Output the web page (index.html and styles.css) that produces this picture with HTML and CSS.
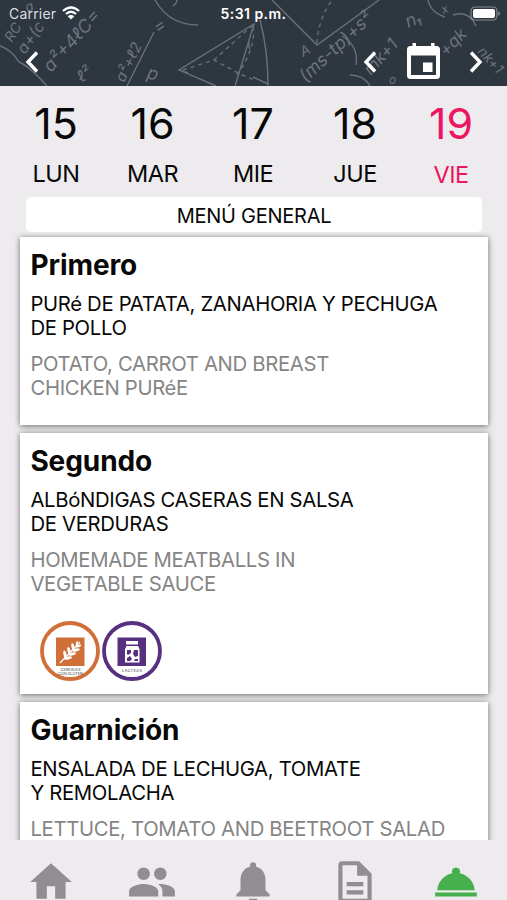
FILE: index.html
```
<!DOCTYPE html>
<html lang="es">

<head>
    <meta charset="UTF-8">
    <title>Menú</title>
    <link rel="stylesheet" href="styles.css">
</head>

<body>
    <header class="header">
        <!-- chalkboard background -->
        <svg class="chalk" width="507" height="86" viewBox="0 0 507 86">
            <g class="chalk-lines">
                <path d="M0 46Q12 50 19 62Q29 66 47 86M127 86L154 32M155 0Q169 25 198 25M173 6Q177 3 177 0" />
                <path d="M216 86L179 70L254 24L235 86M179 70L187 65M179 70L188 73M260 20Q268 50 268 86M254 27Q246 43 250 49M253 77L268 84" />
                <path d="M272 0L287 15L317 45L379 0M428 0Q430 12 445 17M453 15Q469 10 476 26M342 36Q359 46 356 65M350 75Q364 75 370 86" />
                <path stroke-dasharray="4 4" d="M183 70L214 60L240 74L254 80M214 60L254 24M317 43Q318 20 332 0M237 75Q253 53 254 30" />
            </g>
            <g class="chalk-text">
                <text transform="translate(12 43) rotate(-58)" font-size="14">RC</text>
                <text transform="translate(25 55) rotate(-55)" font-size="16">a+(c</text>
                <text transform="translate(27 12) rotate(-20)" font-size="13">a</text>
                <text transform="translate(51 73) rotate(-48)" font-size="18">a²+4ℓC=</text>
                <text transform="translate(82 83) rotate(-38)" font-size="16">ℓ²</text>
                <text transform="translate(124 83) rotate(-64)" font-size="15">a²+ℓ2</text>
                <text transform="translate(146 78) rotate(15)" font-size="18">p</text>
                <text transform="translate(158 34) rotate(-35)" font-size="18">=</text>
                <text transform="translate(303 57) rotate(-28)" font-size="14">A</text>
                <text transform="translate(306 83) rotate(-43)" font-size="18">(ms-tp)+s²</text>
                <text transform="translate(371 76) rotate(-48)" font-size="17">mk+1</text>
                <text transform="translate(408 28) rotate(-22)" font-size="18">n₁</text>
                <text transform="translate(446 57) rotate(-45)" font-size="17">+qk</text>
                <text transform="translate(477 52) rotate(48)" font-size="14">nk+1</text>
                <text transform="translate(443 14) rotate(-20)" font-size="12">x</text>
                <text transform="translate(389 84)" font-size="12">o</text>
            </g>
        </svg>
        <div class="status">
            <div class="carrier">
                <span>Carrier</span>
                <svg width="18" height="14" viewBox="0 0 18 14">
                    <path class="wifi" d="M1 5Q9-2 17 5M4 8Q9 3.5 14 8" />
                    <path fill="#fff" d="M9 13.5L5.7 10.2Q9 7.8 12.3 10.2z" />
                </svg>
            </div>
            <div class="time">5:31 p.m.</div>
            <svg class="battery" width="31" height="16" viewBox="0 0 31 16">
                <rect x="1" y="1" width="26" height="13" rx="4" fill="none" stroke="#858a8f" stroke-width="1.2" />
                <rect x="3" y="3" width="22" height="9" rx="2" fill="#fff" />
                <path fill="#858a8f" d="M28.3 5.2Q32 7.5 28.3 9.8z" />
            </svg>
        </div>
        <div class="toolbar">
            <svg class="arrow" width="14" height="24" viewBox="0 0 14 24">
                <path d="M12 2.5L3 12L12 21.5" />
            </svg>
            <div class="date-nav">
                <svg class="arrow" width="14" height="24" viewBox="0 0 14 24">
                    <path d="M12 2.5L3 12L12 21.5" />
                </svg>
                <svg width="33" height="38" viewBox="0 0 33 38">
                    <path fill="#fff" fill-rule="evenodd" d="M5.5 0h3.5v3h15V0h3.5v3h2q3.5 0 3.5 3.5v26q0 3.5-3.5 3.5h-26q-3.5 0-3.5-3.5v-26q0-3.5 3.5-3.5h2zM4 12.5v19.5h25v-19.5zM16 19.5h9.5v9.5h-9.5z" />
                </svg>
                <svg class="arrow" width="14" height="24" viewBox="0 0 14 24">
                    <path d="M2 2.5L11 12L2 21.5" />
                </svg>
            </div>
        </div>
    </header>

    <nav class="days">
        <div class="day"><span class="number">15</span><span class="name">LUN</span></div>
        <div class="day"><span class="number">16</span><span class="name">MAR</span></div>
        <div class="day"><span class="number">17</span><span class="name">MIE</span></div>
        <div class="day"><span class="number">18</span><span class="name">JUE</span></div>
        <div class="day selected"><span class="number">19</span><span class="name">VIE</span></div>
    </nav>

    <div class="menu-type">MENÚ GENERAL</div>

    <main class="courses">
        <section class="card">
            <h2>Primero</h2>
            <p>PURé DE PATATA, ZANAHORIA Y PECHUGA<br>DE POLLO</p>
            <p class="english">POTATO, CARROT AND BREAST<br>CHICKEN PURéE</p>
        </section>
        <section class="card second">
            <h2>Segundo</h2>
            <p>ALBóNDIGAS CASERAS EN SALSA<br>DE VERDURAS</p>
            <p class="english">HOMEMADE MEATBALLS IN<br>VEGETABLE SAUCE</p>
            <div class="allergens">
                <svg width="60" height="60" viewBox="0 0 60 60">
                    <circle cx="30" cy="30" r="28" fill="#fff" stroke="#d07038" stroke-width="3.8" />
                    <rect x="16" y="16.5" width="28.5" height="28.5" fill="#d07038" />
                    <path stroke="#fff" stroke-width="1.2" d="M20 42L40 21" />
                    <g fill="#fff">
                        <ellipse cx="25" cy="33.5" rx="1.5" ry="4" transform="rotate(-12 25 33.5)" />
                        <ellipse cx="29" cy="30" rx="1.5" ry="4" transform="rotate(-12 29 30)" />
                        <ellipse cx="33" cy="26" rx="1.5" ry="3.8" transform="rotate(-12 33 26)" />
                        <ellipse cx="37" cy="23" rx="1.2" ry="3" transform="rotate(5 37 23)" />
                        <ellipse cx="28" cy="37" rx="4" ry="1.5" transform="rotate(-12 28 37)" />
                        <ellipse cx="32" cy="33" rx="4" ry="1.5" transform="rotate(-12 32 33)" />
                        <ellipse cx="36" cy="29" rx="3.8" ry="1.5" transform="rotate(-12 36 29)" />
                        <ellipse cx="38.5" cy="25" rx="3" ry="1.2" transform="rotate(-20 38.5 25)" />
                    </g>
                    <text class="allergen-name" x="30.5" y="49.5" textLength="20">CEREALES</text>
                    <text class="allergen-name" x="30.5" y="53.5" textLength="25">CON GLUTEN</text>
                </svg>
                <svg width="60" height="60" viewBox="0 0 60 60">
                    <circle cx="30" cy="30" r="28" fill="#fff" stroke="#573080" stroke-width="3.8" />
                    <rect x="15.5" y="16.5" width="28.5" height="28.5" fill="#573080" />
                    <path fill="#fff" d="M24 20h12v3.5h-12zM24.5 25h11.5l1.5 3v13.5h-14.5v-13.5z" />
                    <path fill="#573080" d="M25 29h4v3l-3 2-1-1zM32 29h4v6l-3 1-2-3zM25 37l3-2 2 3-2 2h-3zM33 38h3v2h-4z" />
                    <text class="allergen-name" x="30" y="51" textLength="20">LACTEOS</text>
                </svg>
            </div>
        </section>
        <section class="card">
            <h2>Guarnición</h2>
            <p>ENSALADA DE LECHUGA, TOMATE<br>Y REMOLACHA</p>
            <p class="english">LETTUCE, TOMATO AND BEETROOT SALAD</p>
        </section>
    </main>

    <footer class="tabs">
        <svg width="50" height="50" viewBox="0 0 24 24">
            <path d="M10 20v-6h4v6h5v-8h3L12 3 2 12h3v8z" />
        </svg>
        <svg width="50" height="50" viewBox="0 0 24 24">
            <path d="M16 11c1.66 0 2.99-1.34 2.99-3S17.66 5 16 5s-3 1.34-3 3 1.34 3 3 3zm-8 0c1.66 0 2.99-1.34 2.99-3S9.66 5 8 5 5 6.34 5 8s1.34 3 3 3zm0 2c-2.33 0-7 1.17-7 3.5V19h14v-2.5c0-2.33-4.67-3.5-7-3.5zm8 0c-.29 0-.62.02-.97.05 1.16.84 1.97 1.97 1.97 3.45V19h6v-2.5c0-2.33-4.67-3.5-7-3.5z" />
        </svg>
        <svg width="50" height="50" viewBox="0 0 24 24">
            <path d="M12 22c1.1 0 2-.9 2-2h-4c0 1.1.89 2 2 2zm6-6v-5c0-3.07-1.64-5.64-4.5-6.32V4c0-.83-.67-1.5-1.5-1.5s-1.5.67-1.5 1.5v.68C7.63 5.36 6 7.92 6 11v5l-2 2v1h16v-1l-2-2z" />
        </svg>
        <svg width="50" height="50" viewBox="0 0 24 24">
            <path fill-rule="evenodd" d="M6 2h8l6 6v12q0 2-2 2H6q-2 0-2-2V4q0-2 2-2zM6 4v16h12V9h-5V4zM8 12h8v2H8zM8 16h8v2H8z" />
        </svg>
        <svg class="active" width="50" height="50" viewBox="0 0 24 24">
            <path d="M2 17h20v2H2zM13.84 7.79A2 2 0 1 0 10.16 7.79C6.25 8.6 3.27 11.93 3 16h18c-.27-4.07-3.25-7.4-7.16-8.21z" />
        </svg>
    </footer>
</body>

</html>
```
FILE: styles.css
```
* {
    box-sizing: border-box;
}

body {
    margin: 0;
    height: 900px;
    overflow: hidden;
    display: flex;
    flex-direction: column;
    background-color: #edebed;
    font-family: Inter, "Liberation Sans", sans-serif;
    color: #080808;
}

svg {
    display: block;
    flex: none;
}

h2, p {
    margin: 0;
}

.header {
    position: relative;
    flex: none;
    height: 86px;
    background-color: #2e3640;
    color: #fff;
}

.chalk {
    position: absolute;
    top: 0;
    left: 0;
}

.chalk-lines {
    fill: none;
    stroke: #68707a;
    stroke-width: 1.4;
}

.chalk-text {
    fill: #6c737c;
    font-family: Inter, "Liberation Sans", sans-serif;
    font-style: italic;
}

.status {
    position: relative;
    display: grid;
    grid-template-columns: 1fr auto 1fr;
    align-items: center;
    height: 28px;
    padding: 0 6px 0 9px;
}

.carrier {
    display: flex;
    gap: 6px;
    font-size: 14px;
    line-height: 16px;
    letter-spacing: 0.2px;
    color: #dcdee0;
}

.wifi {
    fill: none;
    stroke: #fff;
    stroke-width: 2.2;
}

.time {
    margin: 0 3px 2px 0;
    font-size: 14px;
    font-weight: 600;
    letter-spacing: 0.45px;
}

.battery {
    justify-self: end;
}

.toolbar {
    position: relative;
    display: flex;
    justify-content: space-between;
    align-items: center;
    height: 68px;
    padding: 0 24px 0 25px;
}

.arrow {
    fill: none;
    stroke: #fff;
    stroke-width: 3.4;
}

.date-nav {
    display: flex;
    align-items: center;
    gap: 29.5px;
}

.days {
    flex: none;
    display: grid;
    grid-template-columns: 96px 97px 104px 100px 92px;
    height: 111px;
    padding: 12px 0 0 8px;
}

.day {
    display: flex;
    flex-direction: column;
    align-items: center;
}

.number {
    font-size: 43px;
    line-height: 51px;
}

.name {
    margin-top: 10px;
    font-size: 23.5px;
    line-height: 30px;
    letter-spacing: -0.5px;
}

.selected {
    color: #ec1561;
}

.selected .name {
    margin-top: 11px;
}

.menu-type {
    flex: none;
    height: 35px;
    margin: 0 25px 0 26px;
    border-radius: 5px;
    background-color: #fff;
    font-size: 20px;
    line-height: 38px;
    letter-spacing: -0.25px;
    text-align: center;
}

/* top padding leaves room for the first card's shadow */
.courses {
    flex: none;
    height: 608px;
    padding-top: 5px;
    overflow: hidden;
}

.card {
    height: 188px;
    margin: 0 19px 8px 20.4px;
    padding: 12px 10px;
    background-color: #fff;
    box-shadow: 0 1px 6px rgba(0, 0, 0, 0.55);
}

.second {
    height: 261px;
}

.card h2 {
    font-size: 28px;
    line-height: 32px;
    font-weight: 700;
    letter-spacing: -0.1px;
}

.card p {
    margin-top: 11px;
    font-size: 20.3px;
    line-height: 24.4px;
    letter-spacing: -0.32px;
    white-space: nowrap;
}

.card .english {
    color: #858585;
}

.allergens {
    display: flex;
    gap: 2px;
    margin: 24px 0 0 10px;
}

.allergen-name {
    font-size: 4px;
    text-anchor: middle;
    fill: #444;
}

.tabs {
    flex: none;
    display: flex;
    justify-content: space-around;
    padding-top: 17px;
    fill: #928d93;
}

.active {
    fill: #46b04f;
}
```
